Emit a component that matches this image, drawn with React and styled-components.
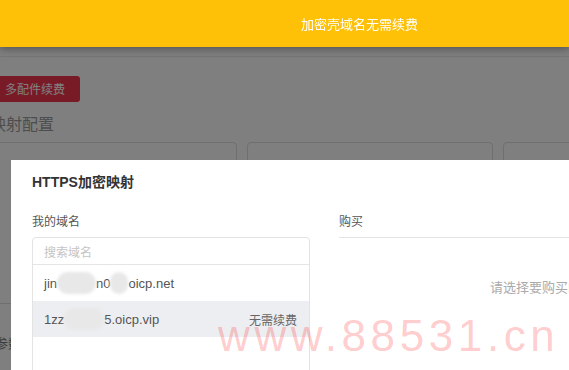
import React from 'react';
import styled, { createGlobalStyle } from 'styled-components';

const GlobalStyle = createGlobalStyle`
  html, body {
    margin: 0;
    padding: 0;
    overflow: hidden;
    background: #ffffff;
  }
  body {
    font-family: "Liberation Sans", "Noto Sans CJK SC", sans-serif;
    color: #555;
  }
`;

// Page behind the dialog
const Page = styled.div`
  width: 569px;
  height: 370px;
  overflow: hidden;
`;

const Header = styled.div`
  height: 56px;
  border-bottom: 1px solid #ececec;
`;

const Content = styled.div`
  margin-left: -10px;
  padding-top: 19px;
`;

const RenewButton = styled.button`
  display: block;
  height: 26px;
  padding: 0 15px;
  border: none;
  border-radius: 3px;
  background: #f2364c;
  color: #ffffff;
  font-family: "Noto Sans CJK SC", sans-serif;
  font-size: 12px;
  line-height: 26px;
`;

const SectionTitle = styled.h2`
  margin: 10px 0 8px;
  font-family: "Noto Sans CJK SC", sans-serif;
  font-size: 16px;
  font-weight: 400;
  line-height: 22px;
  color: #9a9a9a;
`;

const CardGrid = styled.div`
  display: grid;
  grid-template-columns: repeat(3, 246px);
  gap: 10px;
  margin-left: 1px;
`;

const Card = styled.div`
  height: 260px;
  border: 1px solid #dedede;
  border-radius: 4px;
`;

const CardHead = styled.div`
  height: 160px;
  border-bottom: 1px solid #dedede;
`;

const CardRow = styled.div`
  padding: 30px 0 0 3px;
  font-family: "Noto Sans CJK SC", sans-serif;
  font-size: 13px;
  line-height: 18px;
  color: #777;
`;

// Overlays
const Backdrop = styled.div`
  position: fixed;
  inset: 0;
  background: rgba(0, 0, 0, 0.5);
  z-index: 10;
`;

const Banner = styled.div`
  position: fixed;
  top: 0;
  left: 0;
  right: 0;
  height: 47px;
  display: flex;
  align-items: center;
  padding-left: 301px;
  background: #ffc107;
  box-shadow: 0 2px 8px rgba(0, 0, 0, 0.35);
  color: #ffffff;
  font-family: "Noto Sans CJK SC", sans-serif;
  font-size: 13px;
  z-index: 30;
`;

const Modal = styled.div`
  position: fixed;
  top: 160px;
  left: 11px;
  width: 780px;
  height: 260px;
  background: #ffffff;
  padding: 12px 21px 0;
  z-index: 20;
`;

const ModalTitle = styled.h3`
  margin: 0;
  font-family: "Liberation Sans", "Noto Sans CJK SC", sans-serif;
  font-size: 14px;
  font-weight: 700;
  line-height: 20px;
  color: #333;
`;

const Columns = styled.div`
  display: grid;
  grid-template-columns: 278px 419px;
  gap: 29px;
  margin-top: 20px;
`;

const Label = styled.div`
  font-family: "Noto Sans CJK SC", sans-serif;
  font-size: 12px;
  line-height: 18px;
  color: #555;
  margin-bottom: 7px;
`;

const DomainBox = styled.div`
  height: 200px;
  border: 1px solid #e3e3e3;
  border-radius: 4px;
`;

const Search = styled.input`
  display: block;
  box-sizing: border-box;
  width: 100%;
  height: 27px;
  padding: 0 11px;
  border: none;
  border-bottom: 1px solid #e5e5e5;
  border-radius: 4px 4px 0 0;
  outline: none;
  background: transparent;
  font-family: "Noto Sans CJK SC", sans-serif;
  font-size: 12px;
  color: #555;

  &::placeholder {
    color: #c4c4c4;
  }
`;

const DomainRow = styled.div`
  display: flex;
  align-items: center;
  justify-content: space-between;
  height: 36px;
  padding: 0 12px 0 11px;
  background: ${(p) => (p.$active ? '#edeef1' : 'transparent')};
  font-size: 13px;
  color: #555;
`;

const DomainName = styled.span`
  display: flex;
  align-items: center;
  white-space: nowrap;
`;

// blurred-out part of a domain name
const Blur = styled.span`
  display: inline-block;
  width: ${(p) => p.$w}px;
  height: 22px;
  border-radius: 11px;
  background: #e8e8e8;
  filter: blur(1.5px);
`;

const Note = styled.span`
  font-family: "Noto Sans CJK SC", sans-serif;
  font-size: 12px;
  color: #666;
`;

const BuyPanel = styled.div`
  border-top: 1px solid #e5e5e5;
  padding-top: 40px;
  text-align: center;
  font-family: "Noto Sans CJK SC", sans-serif;
  font-size: 13px;
  line-height: 18px;
  color: #aaa;
`;

const Watermark = styled.div`
  position: fixed;
  left: 218px;
  top: 314px;
  font-family: "Liberation Sans", sans-serif;
  font-size: 44px;
  line-height: 1;
  letter-spacing: 4.6px;
  color: rgba(255, 0, 0, 0.21);
  pointer-events: none;
  z-index: 40;
`;

const App = () => {
  return (
    <>
      <GlobalStyle />
      <Page>
        <Header />
        <Content>
          <RenewButton>多配件续费</RenewButton>
          <SectionTitle>映射配置</SectionTitle>
          <CardGrid>
            <Card>
              <CardHead />
              <CardRow>参数</CardRow>
            </Card>
            <Card />
            <Card />
          </CardGrid>
        </Content>
      </Page>

      <Backdrop />
      <Banner>加密壳域名无需续费</Banner>

      <Modal>
        <ModalTitle>HTTPS加密映射</ModalTitle>
        <Columns>
          <div>
            <Label>我的域名</Label>
            <DomainBox>
              <Search placeholder="搜索域名" />
              <DomainRow>
                <DomainName>
                  jin<Blur $w={39} />n0<Blur $w={18} />oicp.net
                </DomainName>
              </DomainRow>
              <DomainRow $active>
                <DomainName>
                  1zz<Blur $w={40} />5.oicp.vip
                </DomainName>
                <Note>无需续费</Note>
              </DomainRow>
            </DomainBox>
          </div>
          <div>
            <Label>购买</Label>
            <BuyPanel>请选择要购买的域名</BuyPanel>
          </div>
        </Columns>
      </Modal>

      <Watermark>www.88531.cn</Watermark>
    </>
  );
};

export default App;
